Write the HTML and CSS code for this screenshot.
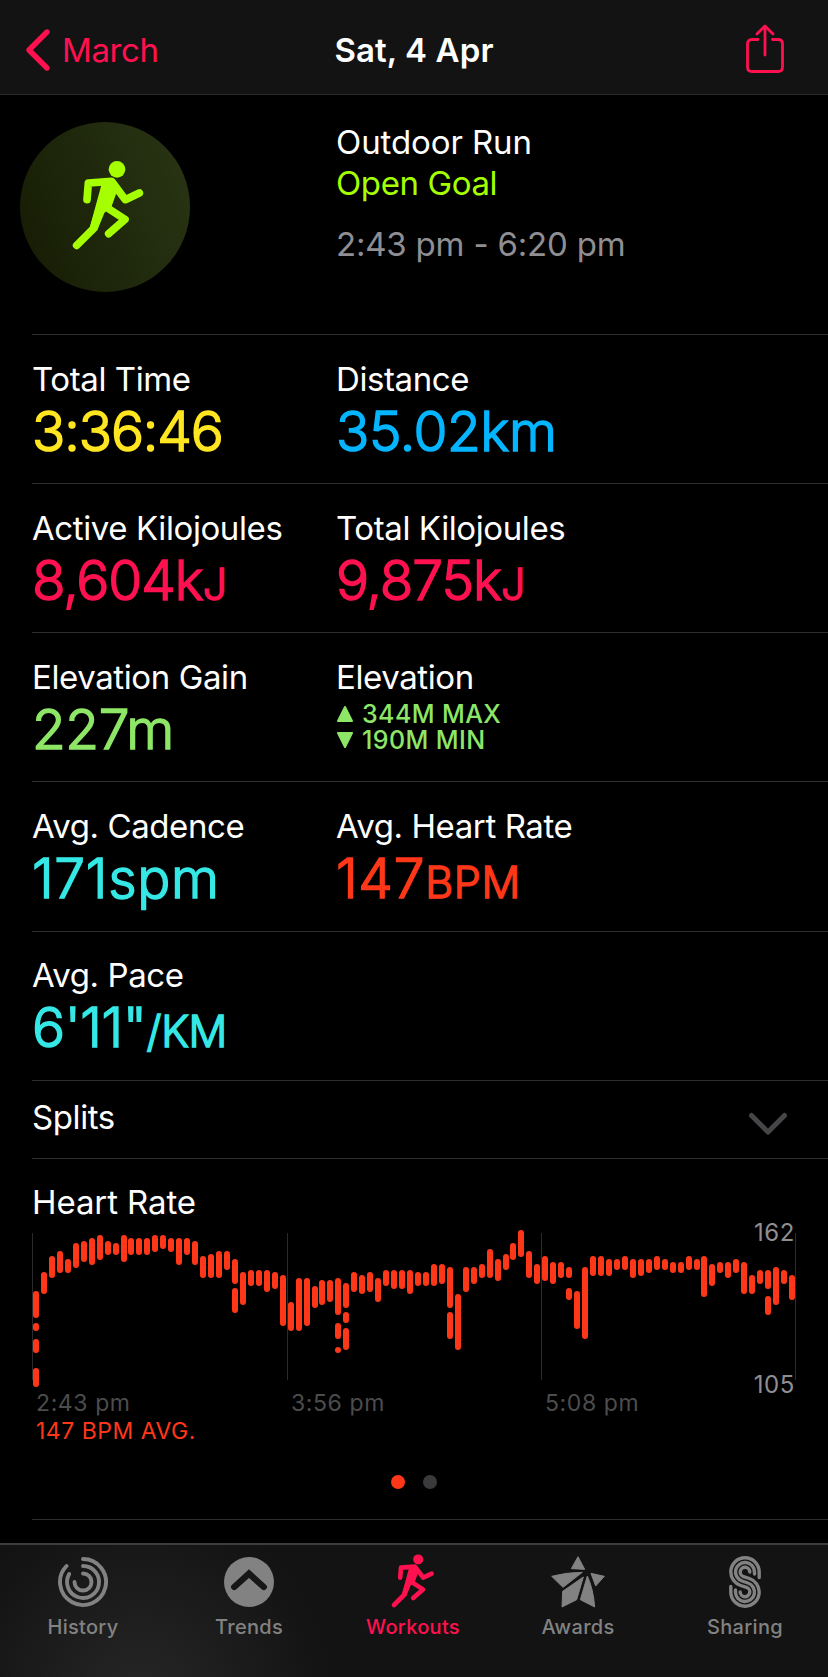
FILE: index.html
```html
<!DOCTYPE html>
<html lang="en">
<head>
    <meta charset="UTF-8">
    <meta name="viewport" content="width=device-width, initial-scale=1.0">
    <title>Workout</title>
    <link rel="stylesheet" href="styles.css">
</head>
<body>
    <svg class="symbols" width="0" height="0">
        <symbol id="runner" viewBox="60 50 230 290">
            <circle cx="201" cy="87" r="25" fill="currentColor"/>
            <path d="M153 138 L165 120 L190 118 L202 150 L185 198 L163 218 L141 272 L119 262 Z" fill="currentColor"/>
            <path d="M111 178 L115 128 L185 123 L226 178 L268 158 M172 135 L130 265 L80 315 M165 198 L225 237 L176 280" fill="none" stroke="currentColor" stroke-width="23" stroke-linecap="round" stroke-linejoin="round"/>
        </symbol>
    </svg>

    <header class="navbar">
        <a class="back">
            <svg width="26" height="44" viewBox="0 0 26 44" fill="none" stroke="currentColor" stroke-width="5.4" stroke-linecap="round" stroke-linejoin="round"><path d="M22 4 L4 22 L22 40"/></svg>
            <span>March</span>
        </a>
        <h1>Sat, 4 Apr</h1>
        <a class="share">
            <svg width="40" height="50" viewBox="0 0 40 50" fill="none" stroke="currentColor" stroke-width="2.8" stroke-linecap="round" stroke-linejoin="round"><path d="M13 15.5 H7 Q2.5 15.5 2.5 20 V43 Q2.5 47.5 7 47.5 H33 Q37.5 47.5 37.5 43 V20 Q37.5 15.5 33 15.5 H27.500 M20 31 V2.500 M12 10 L20 2 L28 10"/></svg>
        </a>
    </header>

    <main>
        <section class="summary">
            <div class="badge"><svg width="76.7" height="96.7"><use href="#runner"/></svg></div>
            <div class="summary-text">
                <p>Outdoor Run</p>
                <p class="goal">Open Goal</p>
                <p class="time">2:43 pm - 6:20 pm</p>
            </div>
        </section>

        <section class="row">
            <div class="cell">
                <h3>Total Time</h3>
                <p class="value yellow">3:36:46</p>
            </div>
            <div class="cell">
                <h3>Distance</h3>
                <p class="value blue">35.02km</p>
            </div>
        </section>
        <section class="row">
            <div class="cell">
                <h3>Active Kilojoules</h3>
                <p class="value pink">8,604k<small>J</small></p>
            </div>
            <div class="cell">
                <h3>Total Kilojoules</h3>
                <p class="value pink">9,875k<small>J</small></p>
            </div>
        </section>
        <section class="row">
            <div class="cell">
                <h3>Elevation Gain</h3>
                <p class="value green">227m</p>
            </div>
            <div class="cell">
                <h3>Elevation</h3>
                <ul class="range green">
                    <li><svg width="18" height="18" viewBox="0 0 18 18"><path d="M9 2 L16 16 H2 Z"/></svg>344M MAX</li>
                    <li><svg width="18" height="18" viewBox="0 0 18 18"><path d="M9 16 L16 2 H2 Z"/></svg>190M MIN</li>
                </ul>
            </div>
        </section>
        <section class="row tall">
            <div class="cell">
                <h3>Avg. Cadence</h3>
                <p class="value cyan wide">171spm</p>
            </div>
            <div class="cell">
                <h3>Avg. Heart Rate</h3>
                <p class="value red wide">147<small>BPM</small></p>
            </div>
        </section>
        <section class="row last">
            <div class="cell">
                <h3>Avg. Pace</h3>
                <p class="value cyan">6'11"<small>/KM</small></p>
            </div>
        </section>

        <section class="splits">
            <h3>Splits</h3>
            <svg width="40" height="24" viewBox="0 0 40 24" fill="none" stroke="#464648" stroke-width="5" stroke-linecap="round" stroke-linejoin="round"><path d="M3.500 3.500 L20 20 L36.500 3.500"/></svg>
        </section>

        <section class="heart">
            <h3>Heart Rate</h3>
            <div class="plot">
                <svg id="chart" width="764" height="160" viewBox="0 0 764 160">
                    <path d="M0.500 3 V150 M255.500 3 V150 M509.500 3 V150 M763.500 3 V150" stroke="#2b2b2d"/>
                </svg>
                <span class="limit max">162</span>
                <span class="limit min">105</span>
            </div>
            <div class="hours">
                <span>2:43 pm</span>
                <span>3:56 pm</span>
                <span>5:08 pm</span>
            </div>
            <p class="avg">147 BPM AVG.</p>
            <div class="dots"><i class="on"></i><i></i></div>
        </section>
        <div class="line"></div>
    </main>

    <nav class="tabs">
        <a>
            <svg width="56" height="54" viewBox="-28 -27 56 54" fill="none" stroke="currentColor" stroke-width="3.900" stroke-linecap="round">
                <path d="M0 -23 A23 23 0 1 1 -16.500 -16"/>
                <path d="M0 -16 A16 16 0 1 1 -13.800 -8"/>
                <path d="M0 -8.500 A8.500 8.500 0 1 1 -8.500 0"/>
            </svg>
            <span>History</span>
        </a>
        <a>
            <svg width="56" height="54" viewBox="-28 -27 56 54">
                <circle r="25" fill="currentColor"/>
                <path d="M-14.800 5 L0 -8.400 L14.800 5" fill="none" stroke="#171717" stroke-width="6.300" stroke-linecap="round"/>
            </svg>
            <span>Trends</span>
        </a>
        <a class="active">
            <svg width="46" height="58"><use href="#runner"/></svg>
            <span>Workouts</span>
        </a>
        <a>
            <svg width="56" height="54" viewBox="420 168 168 162" fill="currentColor" stroke="currentColor" stroke-width="3" stroke-linejoin="round">
                <path d="M504 173 L524 211 L484 209 Z"/>
                <path d="M425 232 Q470 220 517 220 L459 265 Z"/>
                <path d="M543 223 L583 232 L557 261 Z"/>
                <path d="M520 234 L500 302 L456 324 L458 277 Z"/>
                <path d="M532 231 Q550 270 554 324 L511 302 Z"/>
            </svg>
            <span>Awards</span>
        </a>
        <a>
            <svg width="32" height="54" viewBox="0 -1 32 54" fill="none" stroke="currentColor" stroke-width="3.400" stroke-linecap="round">
                <path d="M30.200 21.500 V16 A14.200 14.200 0 0 0 1.800 16 A14.200 14.200 0 0 0 11.600 29.500 L17.500 31.400 A4.800 4.800 0 1 1 11.200 36"/>
                <path d="M25.500 18 V16 A9.500 9.500 0 1 0 13.050 25 L18.950 27 A9.500 9.500 0 1 1 6.500 36 V34"/>
                <path d="M20.800 16 A4.800 4.800 0 1 0 14.500 20.600 L20.400 22.500 A14.200 14.200 0 0 1 30.200 36 A14.200 14.200 0 0 1 1.800 36 V30.500"/>
            </svg>
            <span>Sharing</span>
        </a>
    </nav>

    <script>
        // top and bottom of every bar, in px; a column can have several
        const bars = [
            [61,88,93,101,109,123,138,157], [42,64], [26,48], [21,43], [29,43], [13,38], [11,32], [8,35],
            [5,30], [11,25], [13,25], [5,32], [8,25], [8,25], [8,25], [5,22],
            [5,19], [8,22], [8,35], [8,25], [11,35], [26,48], [24,48], [21,48],
            [21,40], [29,54,58,83], [42,75], [40,56], [40,56], [40,62], [42,59], [45,96],
            [72,101], [48,101], [48,96], [56,78], [50,75], [50,72], [48,85,93,109,117,123], [53,78,82,93,98,120],
            [42,62], [45,64], [42,62], [48,72], [40,56], [40,59], [40,59], [40,64],
            [42,56], [42,56], [34,56], [34,54], [37,78,82,109], [64,120], [37,62], [37,54],
            [34,48], [19,48], [29,51], [24,40], [13,30], [0,27], [21,48], [34,54],
            [26,51], [32,54], [32,48], [37,48,58,70], [61,99], [37,109], [26,46], [26,46],
            [29,46], [29,40], [26,40], [29,48], [29,46], [29,43], [26,40], [29,40],
            [32,43], [32,43], [26,40], [29,40], [26,67], [34,56], [32,43], [32,48],
            [29,43], [32,64], [45,64], [40,54], [40,59,66,85], [37,75], [40,54], [45,70]
        ];
        const chart = document.getElementById('chart');
        bars.forEach((bar, i) => {
            for (let j = 0; j < bar.length; j += 2) {
                const rect = document.createElementNS('http://www.w3.org/2000/svg', 'rect');
                rect.setAttribute('x', Math.round(i * 7.958) + 1);
                rect.setAttribute('y', bar[j]);
                rect.setAttribute('width', 6);
                rect.setAttribute('height', bar[j + 1] - bar[j]);
                rect.setAttribute('rx', 3);
                rect.setAttribute('fill', '#ff3719');
                chart.appendChild(rect);
            }
        });
    </script>
</body>
</html>
```

FILE: styles.css
```css
* {
    box-sizing: border-box;
    margin: 0;
    padding: 0;
}

body {
    width: 828px;
    height: 1677px;
    background-color: #000;
    color: #fff;
    font-family: Inter, "Liberation Sans", sans-serif;
    font-size: 33px;
    line-height: 40px;
    display: flex;
    flex-direction: column;
    overflow: hidden;
}

svg {
    display: block;
    flex: none;
}

.symbols {
    position: absolute;
}

h1, h3 {
    font-size: 33px;
    font-weight: 400;
}

h3 {
    letter-spacing: -0.4px;
}

.navbar {
    height: 95px;
    padding: 6px 25px 0;
    background-color: #131313;
    border-bottom: 1px solid #2a2a2b;
    display: grid;
    grid-template-columns: 1fr auto 1fr;
    align-items: center;
}

.navbar h1 {
    font-weight: 600;
    letter-spacing: 0.1px;
}

.back, .share {
    color: #ff1150;
    display: flex;
    align-items: center;
}

.back {
    gap: 11px;
    letter-spacing: -0.4px;
}

.share {
    justify-content: flex-end;
    padding: 0 18px 2px 0;
}

.summary {
    height: 239px;
    padding: 27px 0 0 20px;
    display: flex;
}

.badge {
    width: 170px;
    height: 170px;
    padding: 0 0 4px 6px;
    border-radius: 50%;
    background: linear-gradient(70deg, #151b03, #2a3615);
    color: #a6ff00;
    display: flex;
    align-items: center;
    justify-content: center;
}

.summary-text {
    margin-left: 146px;
    letter-spacing: -0.1px;
}

.goal {
    margin-top: 1px;
    color: #a6ff00;
    letter-spacing: -0.4px;
}

.time {
    margin-top: 21px;
    color: #8e8e93;
    letter-spacing: -0.2px;
}

.row {
    height: 149px;
    margin-left: 32px;
    padding-top: 24px;
    border-top: 1px solid #2f2f31;
    display: grid;
    grid-template-columns: 304px 1fr;
}

.tall {
    height: 150px;
}

.last {
    padding-top: 23px;
}

.value {
    margin-top: 2px;
    font-size: 55px;
    line-height: 60px;
    font-weight: 300;
    letter-spacing: -0.4px;
    -webkit-text-stroke: 1.5px currentColor;
    stroke-linejoin: round;
}

.value small {
    font-size: 43px;
}

.yellow { color: #ffe620; letter-spacing: -1.1px; }
.blue { color: #04b5ff; }
.pink { color: #ff1150; letter-spacing: -1.1px; }
.green { color: #8ee667; }
.cyan { color: #35e8e6; }
.red { color: #ff3719; }
.wide { letter-spacing: 0.7px; }

.range {
    margin-top: 4px;
    list-style: none;
    font-size: 25px;
    line-height: 26px;
    font-weight: 500;
    letter-spacing: 0.4px;
}

.range li {
    display: flex;
    align-items: center;
    gap: 8px;
}

.range svg {
    fill: currentColor;
    stroke: currentColor;
    stroke-width: 2;
    stroke-linejoin: round;
}

.splits {
    height: 78px;
    margin-left: 32px;
    padding: 16px 40px 0 0;
    border-top: 1px solid #2f2f31;
    display: flex;
    justify-content: space-between;
}

.splits svg {
    margin-top: 15px;
}

.heart {
    height: 361px;
    margin-left: 32px;
    padding-top: 23px;
    border-top: 1px solid #2f2f31;
}

.heart h3 {
    letter-spacing: -0.1px;
}

.plot {
    height: 160px;
    margin-top: 8px;
    position: relative;
}

.limit {
    position: absolute;
    right: 33px;
    font-size: 24px;
    line-height: 24px;
    letter-spacing: 0.6px;
    color: #8e8e93;
}

.max {
    top: -9px;
}

.min {
    bottom: -7px;
}

.hours {
    margin-top: -1px;
    padding-left: 4px;
    display: grid;
    grid-template-columns: 255px 254px 1fr;
    font-size: 23px;
    line-height: 28px;
    letter-spacing: 0.6px;
    color: #4c4c4d;
}

.avg {
    padding-left: 4px;
    font-size: 23px;
    line-height: 28px;
    letter-spacing: 0.5px;
    color: #ff3719;
}

.dots {
    margin-top: 30px;
    padding-right: 32px;
    display: flex;
    justify-content: center;
    gap: 18px;
}

.dots i {
    width: 14px;
    height: 14px;
    border-radius: 50%;
    background-color: #3a3a3c;
}

.dots .on {
    background-color: #ff3719;
}

.line {
    height: 24px;
    margin-left: 32px;
    border-top: 1px solid #2f2f31;
}

.tabs {
    height: 134px;
    border-top: 2px solid #3d3d3d;
    background: radial-gradient(circle at 140px 150px, #262626, #131313 190px);
    color: #828282;
    display: grid;
    grid-template-columns: 166px 166px 162px 168px 166px;
    font-size: 20px;
    line-height: 24px;
    font-weight: 500;
    letter-spacing: 0.3px;
}

.tabs a {
    padding-top: 10px;
    display: flex;
    flex-direction: column;
    align-items: center;
    gap: 6px;
}

.tabs .active {
    padding-top: 7px;
    gap: 5px;
    color: #ff1150;
}
```
